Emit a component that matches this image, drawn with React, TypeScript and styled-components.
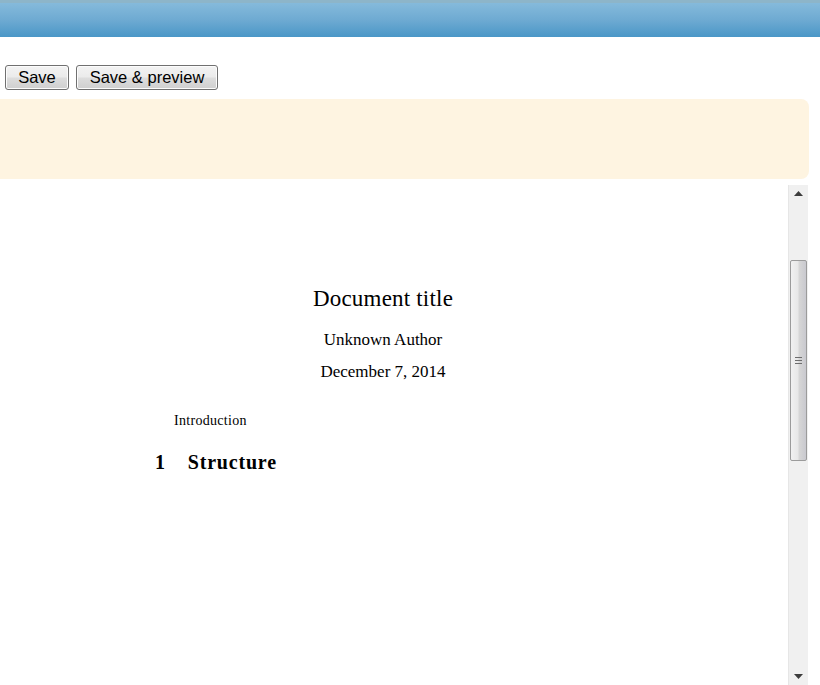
import React from 'react';
import styled, { createGlobalStyle } from 'styled-components';

const GlobalStyle = createGlobalStyle`
  html, body {
    margin: 0;
    padding: 0;
    background: #ffffff;
    overflow: hidden;
  }
  body {
    font-family: 'Liberation Sans', Arial, sans-serif;
  }
`;

const Page = styled.div`
  width: 820px;
  height: 685px;
  display: flex;
  flex-direction: column;
  overflow: hidden;
`;

const Header = styled.div`
  height: 34px;
  border-top: 3px solid #8db5c9;
  background: linear-gradient(#85badb, #6eaad2 50%, #4a97c7);
  flex-shrink: 0;
`;

const Toolbar = styled.div`
  display: flex;
  gap: 7px;
  padding: 28px 0 0 5px;
`;

const Button = styled.button<{ $w: number }>`
  width: ${(p) => p.$w}px;
  height: 25px;
  padding: 0 0 2px;
  font-family: 'Liberation Sans', Arial, sans-serif;
  font-size: 16.5px;
  color: #000;
  border: 1px solid #707070;
  border-radius: 3px;
  background: linear-gradient(#f3f3f3, #ebebeb 48%, #dddddd 52%, #cfcfcf);
  box-shadow: inset 0 0 0 1px #fcfcfc;
  line-height: 20px;
`;

const Notice = styled.div`
  margin: 9px 11px 0 -10px;
  height: 80px;
  background: #fef4e1;
  border-radius: 8px;
`;

const Viewer = styled.div`
  margin-top: 6px;
  display: flex;
  flex: 1;
  width: 808px;
`;

const Paper = styled.div`
  flex: 1;
  font-family: 'Liberation Serif', 'Times New Roman', serif;
  color: #000;
`;

const TitleBlock = styled.div`
  width: 766px;
  padding-top: 100px;
  text-align: center;
`;

const Title = styled.div`
  font-size: 23px;
  letter-spacing: 0.2px;
  line-height: 28px;
`;

const Meta = styled.div<{ $gap: number }>`
  font-size: 17px;
  line-height: 20px;
  margin-top: ${(p) => p.$gap}px;
`;

const Abstract = styled.div`
  font-size: 14px;
  letter-spacing: 0.3px;
  padding-left: 174px;
  margin-top: 31px;
`;

const Section = styled.div`
  display: flex;
  gap: 22px;
  padding-left: 155px;
  margin-top: 22px;
  font-size: 20px;
  letter-spacing: 0.8px;
  font-weight: bold;
`;

const ScrollTrack = styled.div`
  width: 19px;
  background: #f0f0f0;
  display: flex;
  flex-direction: column;
  align-items: center;
  border-left: 1px solid #e6e6e6;
`;

const Arrow = styled.div`
  height: 17px;
  width: 19px;
  display: flex;
  align-items: center;
  justify-content: center;
  flex-shrink: 0;
`;

const Thumb = styled.div`
  margin-top: 58px;
  width: 17px;
  height: 201px;
  box-sizing: border-box;
  border: 1px solid #9b9b9b;
  border-radius: 2px;
  background: linear-gradient(90deg, #f1f1f1, #e8e8e8 45%, #d6d6d6 55%, #c9c9cf);
  display: flex;
  align-items: center;
  justify-content: center;
`;

const Grip = styled.div`
  width: 7px;
  height: 7px;
  background: repeating-linear-gradient(#6d6d6d 0 1px, transparent 1px 3px);
`;

const Spacer = styled.div`
  flex: 1;
`;

const ArrowIcon = ({ down }: { down?: boolean }) => (
  <svg width="9" height="5" viewBox="0 0 9 5">
    <polygon
      points={down ? '0,0 9,0 4.5,5' : '4.5,0 9,5 0,5'}
      fill="#3c3c3c"
    />
  </svg>
);

const App: React.FC = () => {
  return (
    <Page>
      <GlobalStyle />
      <Header />
      <Toolbar>
        <Button $w={64}>Save</Button>
        <Button $w={142}>Save &amp; preview</Button>
      </Toolbar>
      <Notice />
      <Viewer>
        <Paper>
          <TitleBlock>
            <Title>Document title</Title>
            <Meta $gap={17}>Unknown Author</Meta>
            <Meta $gap={12}>December 7, 2014</Meta>
          </TitleBlock>
          <Abstract>Introduction</Abstract>
          <Section>
            <span>1</span>
            <span>Structure</span>
          </Section>
        </Paper>
        <ScrollTrack>
          <Arrow>
            <ArrowIcon />
          </Arrow>
          <Thumb>
            <Grip />
          </Thumb>
          <Spacer />
          <Arrow>
            <ArrowIcon down />
          </Arrow>
        </ScrollTrack>
      </Viewer>
    </Page>
  );
};

export default App;
